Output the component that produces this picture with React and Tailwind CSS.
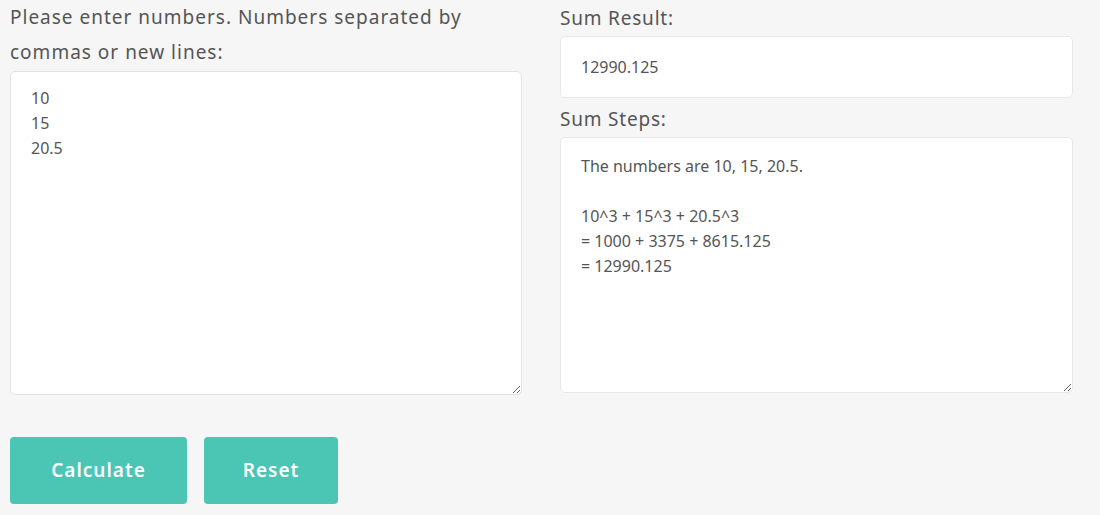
export default function App() {
  const font = { fontFamily: '"Noto Sans", "Open Sans", sans-serif' }
  return (
    <div className="min-h-screen bg-[#f6f6f6] text-[#555]" style={font}>
      <div className="flex gap-[38px] pl-[10px]">
        {/* left column */}
        <div className="w-[512px] flex flex-col">
          <label className="text-[19px] leading-[35px] tracking-[1px]">
            Please enter numbers. Numbers separated by
            <br />
            commas or new lines:
          </label>
          <textarea
            className="mt-[1px] h-[324px] w-full rounded-[5px] border border-[#e2e2e2] bg-white px-5 py-[14px] text-[16px] leading-[25px] text-[#555] outline-none"
            defaultValue={'10\n15\n20.5'}
          />
        </div>

        {/* right column */}
        <div className="w-[513px] flex flex-col">
          <label className="text-[19px] leading-[36px] tracking-[0.8px]">Sum Result:</label>
          <div className="h-[62px] rounded-[5px] border border-[#e8e8e8] bg-white px-5 flex items-center text-[16px]">
            12990.125
          </div>
          <label className="mt-[3px] text-[19px] leading-[36px] tracking-[0.8px]">Sum Steps:</label>
          <textarea
            className="h-[256px] w-full rounded-[5px] border border-[#e8e8e8] bg-white px-5 py-[16px] text-[16px] leading-[25px] text-[#555] outline-none"
            defaultValue={'The numbers are 10, 15, 20.5.\n\n10^3 + 15^3 + 20.5^3\n= 1000 + 3375 + 8615.125\n= 12990.125'}
          />
        </div>
      </div>

      <div className="flex gap-[17px] pl-[10px] mt-[42px]">
        <button className="h-[67px] w-[177px] rounded-[4px] bg-[#4bc5b4] text-white text-[19px] font-semibold tracking-[1px]">
          Calculate
        </button>
        <button className="h-[67px] w-[134px] rounded-[4px] bg-[#4bc5b4] text-white text-[19px] font-semibold tracking-[1px]">
          Reset
        </button>
      </div>
    </div>
  )
}
